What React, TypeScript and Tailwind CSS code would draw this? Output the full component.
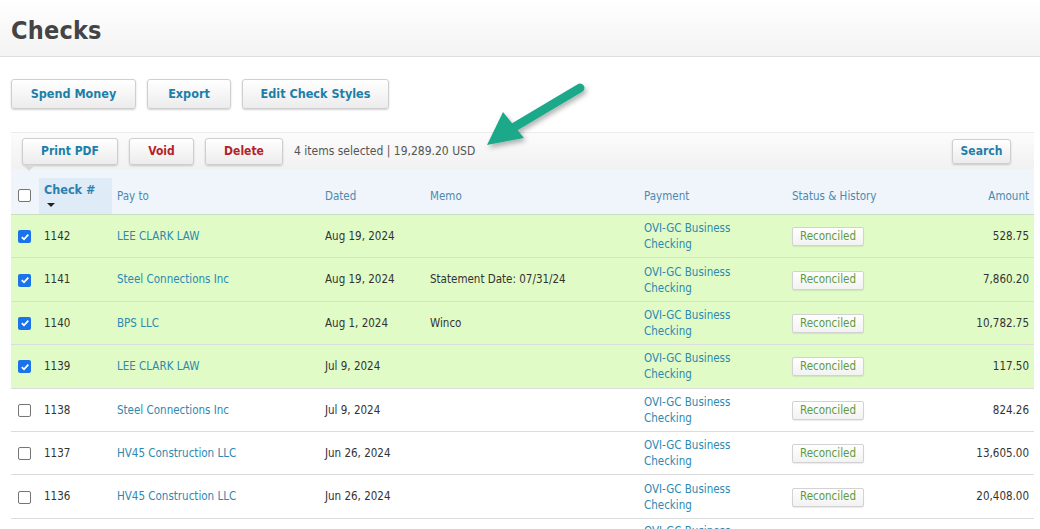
import React from "react";

type Row = {
  num: string;
  payTo: string;
  dated: string;
  memo: string;
  amount: string;
  selected: boolean;
};

const rows: Row[] = [
  { num: "1142", payTo: "LEE CLARK LAW", dated: "Aug 19, 2024", memo: "", amount: "528.75", selected: true },
  { num: "1141", payTo: "Steel Connections Inc", dated: "Aug 19, 2024", memo: "Statement Date: 07/31/24", amount: "7,860.20", selected: true },
  { num: "1140", payTo: "BPS LLC", dated: "Aug 1, 2024", memo: "Winco", amount: "10,782.75", selected: true },
  { num: "1139", payTo: "LEE CLARK LAW", dated: "Jul 9, 2024", memo: "", amount: "117.50", selected: true },
  { num: "1138", payTo: "Steel Connections Inc", dated: "Jul 9, 2024", memo: "", amount: "824.26", selected: false },
  { num: "1137", payTo: "HV45 Construction LLC", dated: "Jun 26, 2024", memo: "", amount: "13,605.00", selected: false },
  { num: "1136", payTo: "HV45 Construction LLC", dated: "Jun 26, 2024", memo: "", amount: "20,408.00", selected: false },
];

const cols = "grid grid-cols-[28px_73px_208px_105px_214px_148px_113px_134px]";

function Checkbox({ checked }: { checked: boolean }) {
  if (checked) {
    return (
      <span className="flex h-[13px] w-[13px] items-center justify-center rounded-[2px] bg-[#1a73e8]">
        <svg width="10" height="10" viewBox="0 0 10 10">
          <path d="M1.8 5.2 L4 7.3 L8.3 2.6" fill="none" stroke="white" strokeWidth="1.8" />
        </svg>
      </span>
    );
  }
  return <span className="block h-[13px] w-[13px] rounded-[2px] border border-[#767676] bg-white" />;
}

function Btn({ children, className }: { children: React.ReactNode; className: string }) {
  return (
    <button
      className={
        "flex items-center justify-center rounded-[3px] border border-[#cfcfcf] bg-[linear-gradient(180deg,#ffffff_0%,#ececec_100%)] font-bold shadow-[0_1px_2px_rgba(0,0,0,0.18)] " +
        className
      }
    >
      {children}
    </button>
  );
}

export default function App() {
  return (
    <div className="relative h-[529px] w-[1040px] overflow-hidden bg-white font-['DejaVu_Sans_Condensed','DejaVu_Sans',sans-serif] text-[11.5px] text-[#333]">
      <div className="flex h-[57px] items-center border-b border-[#dedede] bg-[linear-gradient(180deg,#ffffff_0%,#f3f3f3_100%)] px-[11px] pt-[6px]">
        <h1 className="text-[25px] font-bold tracking-[0.2px] text-[#444]">Checks</h1>
      </div>

      <div className="flex gap-[11px] px-[11px] pt-[22px]">
        <Btn className="h-[30px] w-[125px] text-[12.5px] text-[#1d7ea9]">Spend Money</Btn>
        <Btn className="h-[30px] w-[84px] text-[12.5px] text-[#1d7ea9]">Export</Btn>
        <Btn className="h-[30px] w-[147px] text-[12.5px] text-[#1d7ea9]">Edit Check Styles</Btn>
      </div>

      <div className="ml-[11px] mt-[23px] w-[1023px]">
        <div className="relative flex h-[37px] items-center border-t border-[#ececec] bg-[linear-gradient(180deg,#fcfcfc_0%,#f1f1f1_100%)] pl-[11px] pr-[23px]">
          <Btn className="h-[27px] w-[96px] text-[12px] text-[#1d7ea9]">Print PDF</Btn>
          <Btn className="ml-[11px] h-[27px] w-[65px] text-[12px] text-[#b51f2a]">Void</Btn>
          <Btn className="ml-[11px] h-[27px] w-[78px] text-[12px] text-[#b51f2a]">Delete</Btn>
          <span className="ml-[11px] text-[12px] text-[#555]">4 items selected | 19,289.20 USD</span>
          <Btn className="ml-auto h-[25px] w-[59px] text-[12px] text-[#1d7ea9]">Search</Btn>
          <span className="absolute left-[12px] top-[32px] h-0 w-0 border-x-[6px] border-t-[6px] border-x-transparent border-t-[#d9d9d9]" />
        </div>

        <div className={cols + " h-[46px] border-b border-[#c9dfc0] bg-[#eff5fb] text-[#4d89ad]"}>
          <div className="flex items-center pl-[7px] pt-[8px]">
            <Checkbox checked={false} />
          </div>
          <div className="mt-[9px] flex flex-col bg-[#dfebf6] pl-[5px] pt-[3px]">
            <span className="text-[12.5px] font-bold text-[#2a80b0]">Check #</span>
            <span className="ml-[3px] mt-[3px] h-0 w-0 border-x-[4px] border-t-[4px] border-x-transparent border-t-[#222]" />
          </div>
          <div className="flex items-center pl-[5px] pt-[10px]">Pay to</div>
          <div className="flex items-center pl-[5px] pt-[10px]">Dated</div>
          <div className="flex items-center pl-[5px] pt-[10px]">Memo</div>
          <div className="flex items-center pl-[5px] pt-[10px]">Payment</div>
          <div className="flex items-center pl-[5px] pt-[10px]">Status &amp; History</div>
          <div className="flex items-center justify-end pr-[5px] pt-[10px]">Amount</div>
        </div>

        {rows.map((r) => (
          <div
            key={r.num}
            className={
              cols +
              " h-[43.4px] border-b border-[#dcdcdc] " +
              (r.selected ? "bg-[#e0fbc6]" : "bg-white")
            }
          >
            <div className="flex items-center pl-[7px] pt-[1px]">
              <Checkbox checked={r.selected} />
            </div>
            <div className="flex items-center pl-[5px] pt-[1px]">{r.num}</div>
            <div className="flex items-center pl-[5px] pt-[1px] text-[#2c89b2]">{r.payTo}</div>
            <div className="flex items-center pl-[5px] pt-[1px]">{r.dated}</div>
            <div className="flex items-center pl-[5px] pt-[1px]">{r.memo}</div>
            <div className="flex flex-col justify-center pl-[5px] leading-[16px] text-[#2c89b2]">
              <span>OVI-GC Business</span>
              <span>Checking</span>
            </div>
            <div className="flex items-center pl-[5px] pt-[1px]">
              <span className="flex h-[19px] w-[72px] items-center justify-center rounded-[2px] border border-[#d2d2d2] bg-[linear-gradient(180deg,#ffffff_0%,#f2f2f2_100%)] text-[#5d9a3c] shadow-[0_1px_1px_rgba(0,0,0,0.08)]">
                Reconciled
              </span>
            </div>
            <div className="flex items-center justify-end pr-[5px] pt-[1px]">{r.amount}</div>
          </div>
        ))}
        <div className={cols + " h-[40px] bg-white"}>
          <div />
          <div />
          <div />
          <div />
          <div />
          <div className="pl-[5px] pt-[4px] leading-[16px] text-[#2c89b2]">OVI-GC Business</div>
        </div>
      </div>

      <svg className="absolute left-[478px] top-[76px]" width="116" height="78" viewBox="0 0 116 78">
        <defs>
          <filter id="sh" x="-20%" y="-20%" width="150%" height="150%">
            <feDropShadow dx="2" dy="3" stdDeviation="2.5" floodColor="#000" floodOpacity="0.3" />
          </filter>
        </defs>
        <g filter="url(#sh)">
          <line x1="102" y1="12" x2="33" y2="53" stroke="#1ba98a" strokeWidth="9" strokeLinecap="round" />
          <polygon points="9,69 25,36 46,62" fill="#1ba98a" />
        </g>
      </svg>
    </div>
  );
}
